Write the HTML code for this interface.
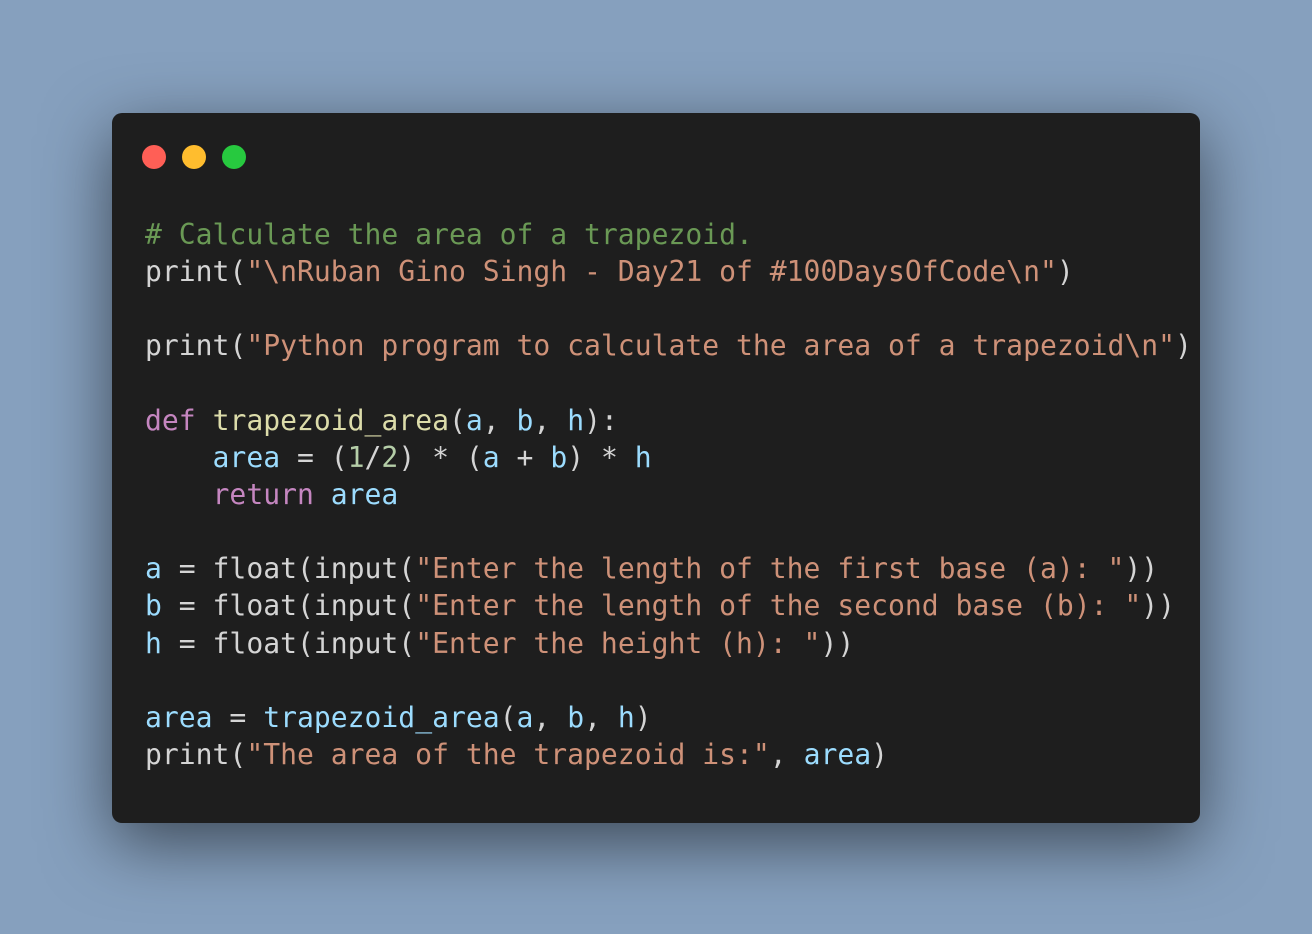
<!DOCTYPE html>
<html><head><meta charset="utf-8"><style>
html,body{margin:0;padding:0;}
body{width:1312px;height:934px;background:#86a0be;position:relative;overflow:hidden;}
.win{position:absolute;left:112px;top:113px;width:1088px;height:710px;background:#1e1e1e;border-radius:10px;box-shadow:0 20px 68px rgba(0,0,0,0.55);}
.dot{position:absolute;top:145px;width:24px;height:24px;border-radius:50%;}
pre{position:absolute;left:145px;top:216px;margin:0;font-family:"DejaVu Sans Mono",monospace;font-size:28.05px;line-height:37.14px;color:#d4d4d4;}
.c{color:#6a9955}.s{color:#ce9178}.f{color:#dcdcaa}.k{color:#c586c0}.v{color:#9cdcfe}.n{color:#b5cea8}
</style></head><body>
<div class="win"></div>
<div class="dot" style="left:142px;background:#ff5f56"></div>
<div class="dot" style="left:182px;background:#ffbd2e"></div>
<div class="dot" style="left:222px;background:#27c93f"></div>
<pre><span class="c"># Calculate the area of a trapezoid.</span>
print(<span class="s">"\nRuban Gino Singh - Day21 of #100DaysOfCode\n"</span>)

print(<span class="s">"Python program to calculate the area of a trapezoid\n"</span>)

<span class="k">def</span> <span class="f">trapezoid_area</span>(<span class="v">a</span>, <span class="v">b</span>, <span class="v">h</span>):
    <span class="v">area</span> = (<span class="n">1</span>/<span class="n">2</span>) * (<span class="v">a</span> + <span class="v">b</span>) * <span class="v">h</span>
    <span class="k">return</span> <span class="v">area</span>

<span class="v">a</span> = float(input(<span class="s">"Enter the length of the first base (a): "</span>))
<span class="v">b</span> = float(input(<span class="s">"Enter the length of the second base (b): "</span>))
<span class="v">h</span> = float(input(<span class="s">"Enter the height (h): "</span>))

<span class="v">area</span> = <span class="v">trapezoid_area</span>(<span class="v">a</span>, <span class="v">b</span>, <span class="v">h</span>)
print(<span class="s">"The area of the trapezoid is:"</span>, <span class="v">area</span>)</pre>
</body></html>
